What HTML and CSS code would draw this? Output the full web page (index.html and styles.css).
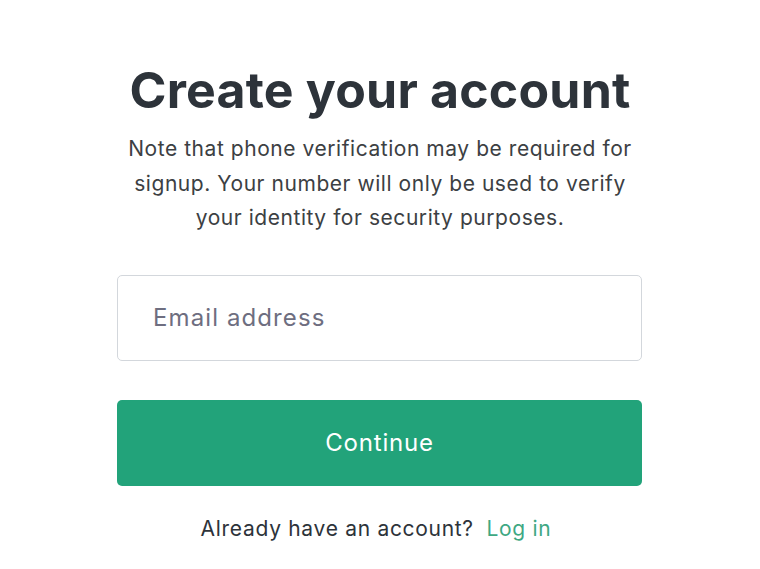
FILE: index.html
```html
<!DOCTYPE html>
<html>
<head>
<meta charset="utf-8">
<link rel="stylesheet" href="styles.css">
</head>
<body>
<main class="page">
  <h1 class="title">Create your account</h1>
  <p class="note">Note that phone verification may be required for signup. Your number will only be used to verify your identity for security purposes.</p>
  <form class="form">
    <div class="field"><span class="placeholder">Email address</span></div>
    <button type="button" class="btn">Continue</button>
  </form>
  <p class="footer">Already have an account? <a class="link" href="#">Log in</a></p>
</main>
</body>
</html>
```
FILE: styles.css
```css
* { box-sizing: border-box; }
html, body { margin: 0; padding: 0; background: #fff; }
body { font-family: Inter, "Noto Sans", sans-serif; color: #2d333a; }
.page {
  width: 760px;
  height: 569px;
  display: flex;
  flex-direction: column;
  align-items: center;
  padding-top: 58px;
}
.title {
  margin: 0;
  font-size: 50px;
  font-weight: 700;
  line-height: 64px;
  letter-spacing: 0.2px;
  color: #2d333a;
}
.note {
  margin: 10px 0 0;
  width: 524px;
  text-align: center;
  font-size: 21px;
  line-height: 34.5px;
  letter-spacing: 0.55px;
  color: #3c4043;
}
.form {
  margin-top: 39px;
  width: 525px;
  display: flex;
  flex-direction: column;
  gap: 39px;
  margin-left: -1px;
}
.field {
  height: 86px;
  border: 1px solid #d3d7dc;
  border-radius: 5px;
  display: flex;
  align-items: center;
  padding-left: 35px;
}
.placeholder {
  font-size: 24px;
  letter-spacing: 1.1px;
  color: #6e6e80;
}
.btn {
  height: 86px;
  border: none;
  border-radius: 5px;
  background: #22a37a;
  color: #fff;
  font-family: inherit;
  font-size: 24px;
  font-weight: 400;
  letter-spacing: 0.8px;
}
.footer {
  margin: 30px 8px 0 0;
  font-size: 21px;
  letter-spacing: 0.7px;
  color: #2d333a;
}
.link { color: #3ea883; text-decoration: none; margin-left: 6px; }
```
